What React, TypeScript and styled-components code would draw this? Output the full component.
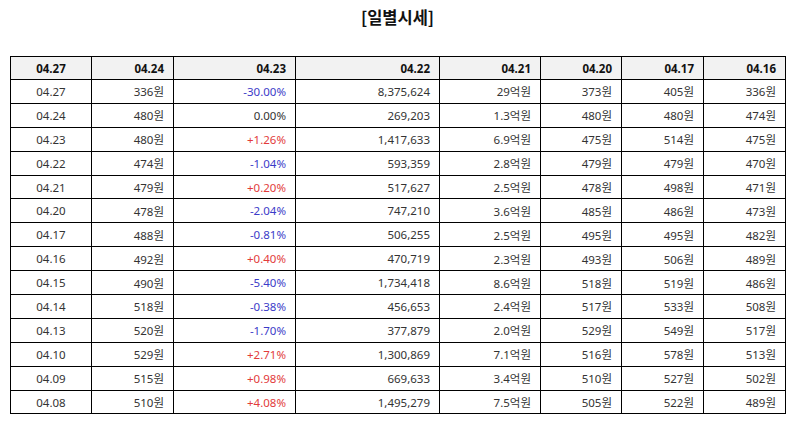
import React from 'react';
import styled, { createGlobalStyle } from 'styled-components';

const GlobalStyle = createGlobalStyle`
  html, body {
    margin: 0;
    padding: 0;
    background: #ffffff;
  }
  body {
    font-family: "Noto Sans", "Noto Sans CJK KR", sans-serif;
  }
`;

const Page = styled.div`
  width: 794px;
  padding: 0 9px 0 10px;
  box-sizing: border-box;
`;

const Title = styled.h2`
  margin: 0;
  height: 56px;
  padding-top: 6px;
  box-sizing: border-box;
  text-align: center;
  font-size: 16.5px;
  font-weight: 700;
  color: #111;
  font-family: "Noto Sans CJK KR", sans-serif;
  line-height: 22px;
`;

const Table = styled.table`
  width: 776px;
  border-collapse: collapse;
  table-layout: fixed;
  font-size: 11.5px;
  border: 1.5px solid #000;
`;

const HeadCell = styled.th<{ $center?: boolean }>`
  height: 22px;
  padding: 0 9px;
  border: 1px solid #000;
  background: #f2f2f2;
  color: #111;
  font-weight: 700;
  text-align: ${p => (p.$center ? 'center' : 'right')};
`;

const Cell = styled.td<{ $center?: boolean; $tone?: 'up' | 'down' }>`
  height: 22.9px;
  padding: 0 9px;
  border: 1px solid #000;
  color: ${p => (p.$tone === 'up' ? '#e23b3b' : p.$tone === 'down' ? '#3b3bc8' : '#333')};
  text-align: ${p => (p.$center ? 'center' : 'right')};
  white-space: nowrap;
`;

const widths = [81, 82, 122, 144, 101, 81, 82, 82];
const heads = ['04.27', '04.24', '04.23', '04.22', '04.21', '04.20', '04.17', '04.16'];

const rows: string[][] = [
  ['04.27', '336원', '-30.00%', '8,375,624', '29억원', '373원', '405원', '336원'],
  ['04.24', '480원', '0.00%', '269,203', '1.3억원', '480원', '480원', '474원'],
  ['04.23', '480원', '+1.26%', '1,417,633', '6.9억원', '475원', '514원', '475원'],
  ['04.22', '474원', '-1.04%', '593,359', '2.8억원', '479원', '479원', '470원'],
  ['04.21', '479원', '+0.20%', '517,627', '2.5억원', '478원', '498원', '471원'],
  ['04.20', '478원', '-2.04%', '747,210', '3.6억원', '485원', '486원', '473원'],
  ['04.17', '488원', '-0.81%', '506,255', '2.5억원', '495원', '495원', '482원'],
  ['04.16', '492원', '+0.40%', '470,719', '2.3억원', '493원', '506원', '489원'],
  ['04.15', '490원', '-5.40%', '1,734,418', '8.6억원', '518원', '519원', '486원'],
  ['04.14', '518원', '-0.38%', '456,653', '2.4억원', '517원', '533원', '508원'],
  ['04.13', '520원', '-1.70%', '377,879', '2.0억원', '529원', '549원', '517원'],
  ['04.10', '529원', '+2.71%', '1,300,869', '7.1억원', '516원', '578원', '513원'],
  ['04.09', '515원', '+0.98%', '669,633', '3.4억원', '510원', '527원', '502원'],
  ['04.08', '510원', '+4.08%', '1,495,279', '7.5억원', '505원', '522원', '489원'],
];

const toneOf = (v: string) => (v.startsWith('+') ? 'up' : v.startsWith('-') ? 'down' : undefined);

export default function App() {
  return (
    <Page>
      <GlobalStyle />
      <Title>[일별시세]</Title>
      <Table>
        <colgroup>
          {widths.map((w, i) => (
            <col key={i} style={{ width: w }} />
          ))}
        </colgroup>
        <thead>
          <tr>
            {heads.map((h, i) => (
              <HeadCell key={i} $center={i === 0}>
                {h}
              </HeadCell>
            ))}
          </tr>
        </thead>
        <tbody>
          {rows.map(r => (
            <tr key={r[0]}>
              {r.map((v, i) => (
                <Cell key={i} $center={i === 0} $tone={i === 2 ? toneOf(v) : undefined}>
                  {v}
                </Cell>
              ))}
            </tr>
          ))}
        </tbody>
      </Table>
    </Page>
  );
}
